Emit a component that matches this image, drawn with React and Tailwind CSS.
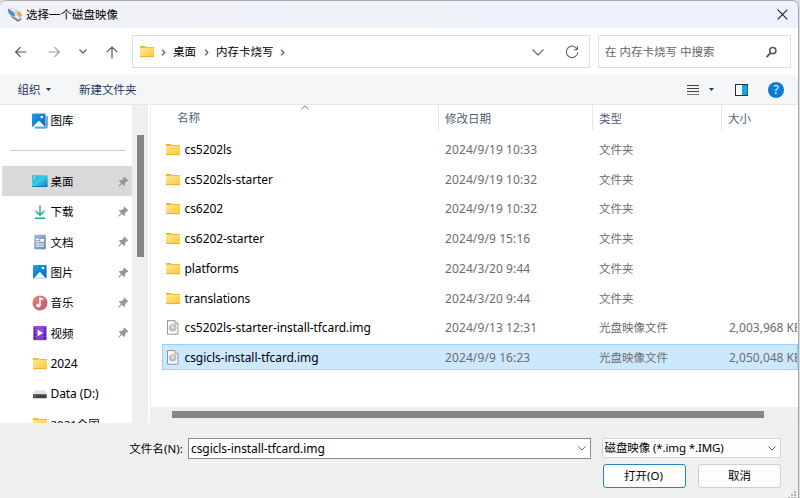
import React from "react";

function FolderIcon({ className = "" }) {
  return (
    <svg className={"shrink-0 " + className} width="15" height="13" viewBox="0 0 15 13">
      <defs>
        <linearGradient id="folder" x1="0" y1="0" x2="1" y2="1">
          <stop offset="0" stopColor="#ffe79b" />
          <stop offset="1" stopColor="#fdc933" />
        </linearGradient>
      </defs>
      <path d="M0 1.6Q0 1 .7 1H4.7L5.8 2H14V5H0Z" fill="#f5b012" />
      <rect x="0" y="2.7" width="14" height="9.3" rx=".4" fill="url(#folder)" />
      <path d="M.2 11.6H13.8" stroke="#eda925" strokeWidth=".9" />
    </svg>
  );
}

function DiscFileIcon() {
  return (
    <svg className="ml-px shrink-0" width="13" height="15" viewBox="0 0 13 15">
      <path d="M.5 .6H8L10.9 3.5V14.2H.5Z" fill="#fafafa" stroke="#8b8b8b" strokeWidth=".9" />
      <path d="M8 .8V3.7H10.7" fill="#ddd" stroke="#8b8b8b" strokeWidth=".7" />
      <circle cx="5.7" cy="7.7" r="3.5" fill="#bcc1c2" stroke="#a8abab" strokeWidth=".5" />
      <path d="M5.7 7.7L3.4 5.5A3.2 3.2 0 0 1 5.7 4.6Z" fill="#d6dada" />
      <circle cx="5.9" cy="7.4" r="1.3" fill="#e9ebeb" />
    </svg>
  );
}

function PictureIcon({ stacked }) {
  return (
    <svg width="16" height="16" viewBox="0 0 16 16">
      <defs>
        <linearGradient id="sky" x1="0" y1="0" x2="1" y2="1">
          <stop offset="0" stopColor="#1d9fe8" />
          <stop offset="1" stopColor="#0966b8" />
        </linearGradient>
      </defs>
      {stacked && <path d="M3 14.9H13.5Q15 14.9 15 13.4V3" fill="none" stroke="#3586ca" strokeWidth="1.4" />}
      <rect x={stacked ? 0 : 1} y={stacked ? 0.5 : 1} width="13.6" height="13.4" rx="1.2" fill="url(#sky)" />
      <path
        d={stacked ? "M.7 13.8L6.3 8.2Q7 7.7 7.7 8.2L13 13.8Z" : "M1.8 14.4L7.1 8.4Q7.8 7.8 8.5 8.4L14 14.4Z"}
        fill="#f1faff"
      />
      <circle cx={stacked ? 9.8 : 11} cy="4" r="1.3" fill="#fff" />
    </svg>
  );
}

function DesktopIcon() {
  return (
    <svg width="16" height="16" viewBox="0 0 16 16">
      <defs>
        <linearGradient id="desk" x1="0" y1="0" x2="1" y2="1">
          <stop offset="0" stopColor="#1bb9cd" />
          <stop offset=".5" stopColor="#35cbe2" />
          <stop offset="1" stopColor="#0874bd" />
        </linearGradient>
      </defs>
      <rect x=".2" y="2.2" width="15.4" height="11.8" rx="1" fill="url(#desk)" />
      <path d="M1.5 4.2H3M1.5 6.2H2.5M3.6 4.2H4.1" stroke="#fff" strokeWidth="1" />
      <path d="M.3 13.5H15.5" stroke="#087bb1" strokeWidth=".9" />
    </svg>
  );
}

function DownloadIcon() {
  return (
    <svg width="16" height="16" viewBox="0 0 16 16" fill="none" stroke="#19ae91" strokeWidth="1.4">
      <path d="M8 1.2V11M3.8 7L8 11.2L12.2 7M3 14.3H13" />
    </svg>
  );
}

function DocumentIcon() {
  return (
    <svg width="16" height="16" viewBox="0 0 16 16">
      <defs>
        <linearGradient id="doc" x1="0" y1="0" x2="1" y2="1">
          <stop offset="0" stopColor="#a9c0d8" />
          <stop offset="1" stopColor="#6584a7" />
        </linearGradient>
      </defs>
      <rect x="2.2" y=".8" width="11.6" height="14.4" rx="1" fill="url(#doc)" />
      <path d="M4 5.4H7.2M4 7.7H7.2M4 10H12M4 12.2H12" stroke="#fff" strokeWidth="1.1" />
      <rect x="8.4" y="5" width="3.5" height="2.8" fill="#fff" />
    </svg>
  );
}

function MusicIcon() {
  return (
    <svg width="16" height="16" viewBox="0 0 16 16">
      <defs>
        <linearGradient id="music" x1="0" y1="0" x2="1" y2="1">
          <stop offset="0" stopColor="#e58a5c" />
          <stop offset="1" stopColor="#ba5785" />
        </linearGradient>
      </defs>
      <circle cx="8" cy="7.9" r="7.5" fill="url(#music)" />
      <path d="M8 10.2V3.2L11.2 4.2" fill="none" stroke="#fff" strokeWidth="1.6" />
      <circle cx="6.5" cy="10.5" r="2.1" fill="#fff" />
    </svg>
  );
}

function VideoIcon() {
  return (
    <svg width="16" height="16" viewBox="0 0 16 16">
      <defs>
        <linearGradient id="video" x1="0" y1="0" x2="1" y2="1">
          <stop offset="0" stopColor="#a456e1" />
          <stop offset="1" stopColor="#7134c8" />
        </linearGradient>
      </defs>
      <rect x="1.2" y=".9" width="13.4" height="14.4" rx="1" fill="url(#video)" />
      <path d="M2.9 2.5V14.2M12.9 2.5V14.2" stroke="#3a187e" strokeWidth="1.6" strokeDasharray="1.8 1.4" />
      <path d="M5.7 4.8L11 8L5.7 11.2Z" fill="#fff" />
    </svg>
  );
}

function DriveIcon() {
  return (
    <svg width="16" height="16" viewBox="0 0 16 16">
      <path d="M3 4.6H12.8L14.6 8.4H1.2Z" fill="#dfe1e4" />
      <rect x="1" y="8.2" width="13.8" height="4" rx=".6" fill="#414346" />
      <rect x="2" y="9.7" width="2" height="1" fill="#35d178" />
    </svg>
  );
}

function PinIcon() {
  return (
    <svg width="11" height="11" viewBox="0 0 11 11">
      <path
        d="M6.2.5L10.5 4.5L9.7 5.3L8.9 5.1L7.1 7.1L7 9.2L6.2 9.9L3.9 7.8L1 10.7L.3 10.1L3 7L.9 4.8L1.7 4L4 3.9L5.8 2.1L5.5 1.2Z"
        fill="#8f979f"
      />
    </svg>
  );
}

function Chevron({ className = "", w = 10, color = "#666", sw = 1.1 }) {
  return (
    <svg className={className} width={w} height={w / 2 + 1} viewBox={`0 0 ${w} ${w / 2 + 1}`} fill="none" stroke={color} strokeWidth={sw}>
      <path d={`M.5 .5L${w / 2} ${w / 2}L${w - 0.5} .5`} />
    </svg>
  );
}

function CrumbChevron({ className }) {
  return (
    <svg className={className} width="5" height="7" viewBox="0 0 5 7" fill="none" stroke="#555" strokeWidth="1.2">
      <path d="M1 .6L3.9 3.5L1 6.4" />
    </svg>
  );
}

const places = [
  { label: "桌面", icon: <DesktopIcon />, pin: true, active: true },
  { label: "下载", icon: <DownloadIcon />, pin: true },
  { label: "文档", icon: <DocumentIcon />, pin: true },
  { label: "图片", icon: <PictureIcon />, pin: true },
  { label: "音乐", icon: <MusicIcon />, pin: true },
  { label: "视频", icon: <VideoIcon />, pin: true },
  { label: "2024", icon: <FolderIcon className="ml-px" />, latin: true },
  { label: "Data (D:)", icon: <DriveIcon />, latin: true },
  { label: "2021全国", icon: <FolderIcon className="ml-px" /> },
];

const files = [
  { name: "cs5202ls", date: "2024/9/19 10:33" },
  { name: "cs5202ls-starter", date: "2024/9/19 10:32" },
  { name: "cs6202", date: "2024/9/19 10:32" },
  { name: "cs6202-starter", date: "2024/9/9 15:16" },
  { name: "platforms", date: "2024/3/20 9:44" },
  { name: "translations", date: "2024/3/20 9:44" },
  { name: "cs5202ls-starter-install-tfcard.img", date: "2024/9/13 12:31", size: "2,003,968 KB" },
  { name: "csgicls-install-tfcard.img", date: "2024/9/9 16:23", size: "2,050,048 KB", selected: true },
];

function TitleBar() {
  return (
    <header className="flex h-[27px] shrink-0 items-center bg-gradient-to-r from-[#f1f2f7] to-[#eef2fc] pl-[7px] pr-[10px]">
      <svg width="16" height="16" viewBox="0 0 16 16">
        <path d="M1 3.5L5 .8L11 3L14.8 11L11 14.6L4 10.5Z" fill="#c9d4dd" />
        <path d="M.6 2.6L2.4 1.4L3.6 4L5.6 3.4L6.6 5.6L9.2 8.6L6.4 9.6L2 6.8Z" fill="#4191c2" />
        <path d="M4.5 1L8.5 3L7.6 6L4.6 3.6Z" fill="#e6edf3" />
        <path d="M11 4.6L13.2 5L15 8.6L13.4 10.2L10.4 7.8Z" fill="#f2a32a" />
        <path d="M4 9.8L5.4 9.6L11 13L14.4 11.2L14.2 12.8L10.8 14.8Z" fill="#6b727a" />
        <path d="M8 7.4L11.8 11.2" stroke="#f0f3f6" strokeWidth="1.4" />
      </svg>
      <span className="ml-[3px] text-[11.5px] text-black">选择一个磁盘映像</span>
      <svg className="ml-auto" width="11" height="11" viewBox="0 0 11 11" stroke="#1b1b1b" strokeWidth="1.1">
        <path d="M.7.7L10.3 10.3M10.3.7L.7 10.3" />
      </svg>
    </header>
  );
}

function NavBar() {
  return (
    <nav className="flex h-[47px] shrink-0 items-center bg-white pl-[15px] pr-[7px]">
      <svg width="12" height="12" viewBox="0 0 12 12" fill="none" stroke="#555" strokeWidth="1.2">
        <path d="M11.3 6H.8M5.5 1.2L.7 6L5.5 10.8" />
      </svg>
      <svg className="ml-[21px]" width="12" height="12" viewBox="0 0 12 12" fill="none" stroke="#a0a0a0" strokeWidth="1.2">
        <path d="M.7 6H11.2M6.5 1.2L11.3 6L6.5 10.8" />
      </svg>
      <Chevron className="ml-[19px]" w={8} sw={1.3} />
      <svg className="ml-[19px] mt-px" width="12" height="13" viewBox="0 0 12 13" fill="none" stroke="#555" strokeWidth="1.2">
        <path d="M6 12.5V1M.8 6.2L6 1L11.2 6.2" />
      </svg>
      <div className="ml-[14px] flex h-[33px] w-[458px] items-center border border-[#dedede] pl-[7px] pr-[10px]">
        <FolderIcon />
        <CrumbChevron className="ml-[6px] mt-px" />
        <span className="ml-[7px] text-[11.5px]">桌面</span>
        <CrumbChevron className="ml-[8px] mt-px" />
        <span className="ml-[7px] text-[11.5px]">内存卡烧写</span>
        <CrumbChevron className="ml-[6px] mt-px" />
        <Chevron className="ml-auto mt-px" w={12} />
        <svg className="ml-[21px] mt-px" width="14" height="14" viewBox="0 0 14 14" fill="none" stroke="#686868" strokeWidth="1.1">
          <path d="M12.2 4.5A5.7 5.7 0 1 0 12.7 7.2M12.4 1V4.7H8.7" />
        </svg>
      </div>
      <div className="ml-[8px] flex h-[33px] flex-1 items-center border border-[#dedede] pl-[6px] pr-[13px] text-[11.5px] text-[#666]">
        <span className="whitespace-pre">在 内存卡烧写 中搜索</span>
        <svg className="ml-auto" width="11" height="12" viewBox="0 0 11 12" fill="none" stroke="#5a5a5a" strokeWidth="1.6">
          <circle cx="6.8" cy="4.6" r="3.1" />
          <path d="M4.5 7L.6 11" strokeWidth="1.8" />
        </svg>
      </div>
    </nav>
  );
}

function CommandBar() {
  return (
    <div className="flex h-[30px] shrink-0 items-center border-b border-[#e4e7ea] bg-[#f4f6f8] pl-[17.5px] pr-[14px] text-[11.5px] text-[#1e395b]">
      <span>组织</span>
      <svg className="ml-[5px]" width="5" height="3" viewBox="0 0 5 3" fill="#1e395b"><path d="M0 0H5L2.5 3Z" /></svg>
      <span className="ml-[28.5px]">新建文件夹</span>
      <svg className="ml-auto" width="12" height="12" viewBox="0 0 12 12" strokeWidth="1">
        <path d="M0 1.5H12M0 4.5H12M0 7.5H12" stroke="#404040" />
        <path d="M0 10.5H12" stroke="#777" />
      </svg>
      <svg className="ml-[10px]" width="5" height="3" viewBox="0 0 5 3" fill="#1e395b"><path d="M0 0H5L2.5 3Z" /></svg>
      <svg className="ml-[21px]" width="13" height="12" viewBox="0 0 13 12">
        <rect x=".5" y=".5" width="12" height="11" fill="#fff" stroke="#263039" />
        <rect x="7" y="1" width="5.5" height="10" fill="#17a2e8" />
      </svg>
      <span className="ml-[20px] flex size-[16px] items-center justify-center rounded-full bg-[#0a7cd5] text-[12px] leading-none text-white">?</span>
    </div>
  );
}

function Sidebar() {
  return (
    <aside className="flex w-[148px] shrink-0 bg-[#efefef]">
      <div className="w-[132px] overflow-hidden bg-white">
        <div className="flex h-[31px] items-center pl-[32px] text-[11.5px]">
          <PictureIcon stacked />
          <span className="ml-[2.5px]">图库</span>
        </div>
        <div className="ml-[10px] mt-[14px] h-px w-[115px] bg-[#cbcbcb]" />
        <div className="pt-[15px]">
          {places.map((p) => (
            <div
              key={p.label}
              className={"ml-[2px] flex h-[30.35px] items-center rounded-[1px] pl-[30px] pr-[3px] " + (p.active ? "bg-[#d9d9d9]" : "")}
            >
              <span className="flex w-4 justify-center">{p.icon}</span>
              <span className={"ml-[2.5px] whitespace-nowrap pt-px " + (p.latin ? "text-[12px] tracking-[-0.08px]" : "text-[11.5px]")}>{p.label}</span>
              {p.pin && <span className="ml-auto"><PinIcon /></span>}
            </div>
          ))}
        </div>
      </div>
      <div className="ml-[5px] mt-[30px] h-[122px] w-[7px] bg-[#858585]" />
    </aside>
  );
}

function FileList() {
  return (
    <main className="flex min-w-0 flex-1 flex-col border-l-2 border-white bg-[#efefef] pl-px">
      <div className="flex min-h-0 flex-1 flex-col border-l border-white bg-white">
        <div className="relative flex h-[25px] shrink-0 items-center text-[11.5px] text-[#4c607a]">
          <span className="w-[286px] pl-[25px] pt-px">名称</span>
          <span className="flex h-full w-[154px] items-center border-l border-[#e5e5e5] pl-[6px] pt-[2px]">修改日期</span>
          <span className="flex h-full w-[129px] items-center border-l border-[#e5e5e5] pl-[6px] pt-[2px]">类型</span>
          <span className="flex h-full items-center border-l border-[#e5e5e5] pl-[6px] pt-[2px]">大小</span>
          <svg className="absolute left-[149px] top-0" width="8" height="5" viewBox="0 0 8 5" fill="none" stroke="#777">
            <path d="M.5 4.3L4 .8L7.5 4.3" />
          </svg>
        </div>
        <div className="pl-[10px] pt-[4px]">
          {files.map((f) => (
            <div key={f.name} className="flex h-[29.75px] items-center">
              <div
                className={
                  "flex h-[26px] w-full items-center overflow-hidden whitespace-nowrap border text-[12px] " +
                  (f.selected ? "border-[#99d1ff] bg-[#cce8ff]" : "border-transparent")
                }
              >
                <div className="flex w-[282px] shrink-0 items-center pl-[3px]">
                  <span className="flex w-[15px] pt-px">{f.size ? <DiscFileIcon /> : <FolderIcon />}</span>
                  <span className="ml-[3.5px] pt-[2px] tracking-[-0.07px]">{f.name}</span>
                </div>
                <span className="w-[154px] shrink-0 pt-[2px] tracking-[0.1px] text-[#6d6d6d]">{f.date}</span>
                <span className="w-[130px] shrink-0 pt-[1.5px] text-[11.5px] text-[#6d6d6d]">{f.size ? "光盘映像文件" : "文件夹"}</span>
                <span className="pt-[2px] text-[#6d6d6d]">{f.size}</span>
              </div>
            </div>
          ))}
        </div>
      </div>
      <div className="h-[16px] shrink-0 bg-[#efefef] pl-[21px] pt-[4px]">
        <div className="h-[7px] w-[592px] bg-[#858585]" />
      </div>
    </main>
  );
}

function Footer() {
  return (
    <footer className="flex h-[75px] shrink-0 bg-[#f0f0f0] pt-[15px] text-[12px]">
      <label className="flex h-[21px] w-[188px] items-center justify-end pr-[5px] text-[11.5px] tracking-[0.08px]">文件名(N):</label>
      <div className="flex h-[21px] w-[403px] items-center justify-between border border-[#8c8c8c] bg-white pl-[2px] pr-[4px]">
        <span className="tracking-[-0.08px]">csgicls-install-tfcard.img</span>
        <Chevron w={8} sw={1} />
      </div>
      <div className="ml-[11px] flex w-[179px] flex-col">
        <div className="flex h-[20px] shrink-0 items-center justify-between border border-[#d5d5d5] bg-[#fdfdfd] pl-[1.5px] pr-[4px]">
          <span className="whitespace-nowrap text-[11.5px] tracking-[-0.12px]">磁盘映像 (*.img *.IMG)</span>
          <Chevron w={8} sw={1} />
        </div>
        <div className="mt-[6px] flex justify-between pl-px text-[11.5px]">
          <button className="h-[24px] w-[83px] rounded-[3px] border border-[#2584ca] bg-[#fdfdfd] pr-[2px]">打开(O)</button>
          <button className="h-[24px] w-[83px] rounded-[3px] border border-[#d0d0d0] bg-[#fdfdfd]">取消</button>
        </div>
      </div>
      <svg className="ml-auto self-end" width="10" height="8" viewBox="0 0 10 8" fill="#b4b4b4">
        <path d="M6 1h2v2h-2zM3 4h2v2h-2zM6 4h2v2h-2zM0 7h2v1h-2zM3 7h2v1h-2zM6 7h2v1h-2z" />
      </svg>
    </footer>
  );
}

export default function App() {
  return (
    <div className="h-[498px] w-[800px] overflow-hidden bg-[#dcdcdc] pr-px font-['Noto_Sans','Noto_Sans_CJK_SC',sans-serif] leading-none text-black">
      <div className="flex h-full flex-col overflow-hidden rounded-t-[7px] border-r border-t border-[#a9a9a9] bg-[#f0f0f0]">
        <TitleBar />
        <NavBar />
        <CommandBar />
        <div className="flex h-[318px] shrink-0">
          <Sidebar />
          <FileList />
        </div>
        <Footer />
      </div>
    </div>
  );
}
